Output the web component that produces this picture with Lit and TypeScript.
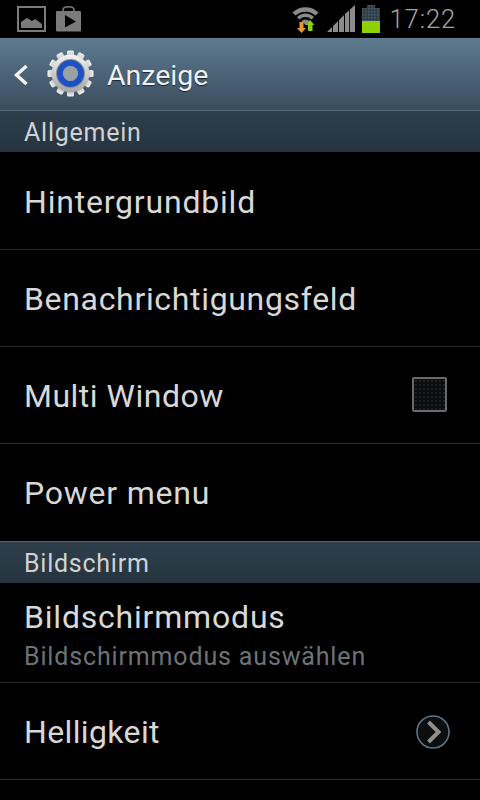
import { LitElement, html, css, svg } from "lit";
import { customElement } from "lit/decorators.js";

const teeth = Array.from({ length: 12 }, (_, i) => i * 30);

@customElement("app-root")
export class AppRoot extends LitElement {
  static styles = css`
    :host { display: block; width: 480px; height: 800px; overflow: hidden; background: #000; font-family: Roboto, "Liberation Sans", sans-serif; color: #e3e3e3; }
    svg { display: block; flex: none; }
    .status { height: 38px; background: #000; display: flex; align-items: center; padding: 0 24px 0 17px; box-sizing: border-box; }
    .status .left { display: flex; gap: 9px; align-items: center; margin-top: -1px; }
    .status .right { margin-left: auto; display: flex; align-items: center; }
    .clock { font-size: 25.5px; color: #a6a6a6; letter-spacing: 0.9px; margin-left: 10px; line-height: 38px; font-weight: 300; }
    .actionbar { height: 72px; box-sizing: border-box; display: flex; align-items: center; padding: 0 0 0 13px; background: linear-gradient(#5f7a8f 0%, #4d6579 45%, #3b4d5e 100%); }
    .title { font-size: 28.5px; color: #f0f0f0; margin-left: 13px; margin-top: 3px; text-shadow: 0 1px 1px #1a2630; line-height: 72px; }
    .gear { margin-left: 18px; }
    .section { height: 42px; box-sizing: border-box; display: flex; align-items: center; padding: 1px 0 0 24px; font-size: 25px; letter-spacing: 0.75px; color: #d2d2d2; background: linear-gradient(#2e3f4b, #25343f); border-top: 1px solid #56697a; }
    .row { box-sizing: border-box; display: flex; align-items: center; padding: 1px 33px 0 24px; border-bottom: 1px solid #2a2a2a; height: 97px; font-size: 32px; letter-spacing: 0.67px; color: #d8d8d8; }
    .row .txt { flex: 1; }
    .row.first { height: 98px; padding-top: 3px; letter-spacing: 0.8px; }
    .row.plain { border-bottom: none; height: 97px; }
    .row.multi { letter-spacing: 0.5px; }
    .row.two { height: 100px; padding-top: 6px; letter-spacing: 0.8px; }
    .sub { font-size: 25px; letter-spacing: 0.85px; color: #6e7276; margin-top: 8px; line-height: 28px; }
    .main { line-height: 36px; margin-top: -2px; }
    .box { width: 35px; height: 35px; box-sizing: border-box; margin: -2px 0 0 0; border: 2px solid #6a6a6a; border-radius: 2px; background-color: #0c0d0e; background-image: radial-gradient(#1d2022 1px, transparent 1.2px); background-size: 4px 4px; }
    .row.last { padding-right: 29px; letter-spacing: 0.37px; }
    .power { letter-spacing: 0.77px; }
  `;

  render() {
    return html`
      <div class="status">
        <div class="left">
          <svg width="29" height="26" viewBox="0 0 29 26">
            <rect x="1" y="1" width="27" height="24" fill="none" stroke="#7b7b7b" stroke-width="2"/>
            <path d="M4 22 V16 L10 12 L15 15 L18 13 L25 18 V22 Z" fill="#7b7b7b"/>
          </svg>
          <svg width="27" height="26" viewBox="0 0 27 26">
            <path d="M8 6 V4 Q8 0.8 13.5 0.8 Q19 0.8 19 4 V6" fill="none" stroke="#7b7b7b" stroke-width="1.6"/>
            <path d="M1 6 Q1 5 2 5 H25 Q26 5 26 6 V24 Q26 25.5 25 25.5 H2 Q1 25.5 1 24 Z" fill="#7b7b7b"/>
            <path d="M10 9 L21 15.5 L10 21.5 Z" fill="#050505"/>
          </svg>
        </div>
        <div class="right">
          <svg width="28" height="28" viewBox="0 0 28 28" style="margin-right:7px">
            <path d="M0.5 7.5 A19 19 0 0 1 26.5 7.5 L23.5 10.5 A15 15 0 0 0 3.5 10.5 Z" fill="#8a8a8a"/>
            <path d="M5 12 A12 12 0 0 1 22 12 L19.5 14.5 A8.5 8.5 0 0 0 7.5 14.5 Z" fill="#8a8a8a"/>
            <path d="M9.5 16 A6.5 6.5 0 0 1 17.5 16 L13.5 20 Z" fill="#8a8a8a"/>
            <path d="M7.5 17 H11.5 V23 H14 L9.5 28 L5 23 H7.5 Z" fill="#f0962a"/>
            <path d="M19 15 L23.5 20 H21.5 V26 H17 V20 H14.5 Z" transform="translate(-1 0)" fill="#8fcc14"/>
          </svg>
          <svg width="28" height="28" viewBox="0 0 28 28" style="margin-right:7px">
            <path d="M0 27 L5 22 V27 Z M6 21 L11 16 V27 H6 Z M12 15 L17 10 V27 H12 Z M18 9 L28 0 V27 H18 Z" fill="#8c8c8c"/>
            <path d="M22.5 5 V27" stroke="#000" stroke-width="0.8"/>
          </svg>
          <svg width="18" height="28" viewBox="0 0 18 28">
            <defs>
              <pattern id="dots" width="3" height="3" patternUnits="userSpaceOnUse">
                <rect width="3" height="3" fill="#2f3d47"/>
                <rect width="1.5" height="1.5" fill="#4c5f6d"/>
              </pattern>
            </defs>
            <rect x="5" y="0" width="8" height="3" fill="url(#dots)"/>
            <rect x="0" y="3" width="18" height="13" fill="url(#dots)"/>
            <rect x="0" y="16" width="18" height="12" fill="#8fd000"/>
          </svg>
          <span class="clock">17:22</span>
        </div>
      </div>
      <div class="actionbar">
        <svg width="16" height="22" viewBox="0 0 16 22" style="margin-top:2px">
          <path d="M13.5 2 L3.5 11 L13.5 20" fill="none" stroke="#f2f2f2" stroke-width="3.4"/>
        </svg>
        <svg class="gear" width="47" height="47" viewBox="0 0 47 47" style="margin-top:-1px">
          <defs>
            <linearGradient id="g" x1="0" y1="0" x2="0" y2="1">
              <stop offset="0" stop-color="#f2f2f2"/>
              <stop offset="1" stop-color="#a4a4a4"/>
            </linearGradient>
          </defs>
          ${teeth.map((a) => svg`<rect x="20" y="0.5" width="7" height="9" rx="1.5" fill="url(#g)" transform="rotate(${a} 23.5 23.5)"/>`)}
          <circle cx="23.5" cy="23.5" r="19" fill="url(#g)"/>
          <circle cx="23.5" cy="23.5" r="14.5" fill="#8e8e8e"/>
          <circle cx="23.5" cy="23.5" r="10.5" fill="none" stroke="#1c52c4" stroke-width="6"/>
          <circle cx="23.5" cy="23.5" r="7.5" fill="#9aa0a4"/>
        </svg>
        <span class="title">Anzeige</span>
      </div>
      <div class="section">Allgemein</div>
      <div class="row first"><span class="txt">Hintergrundbild</span></div>
      <div class="row"><span class="txt">Benachrichtigungsfeld</span></div>
      <div class="row multi"><span class="txt">Multi Window</span><div class="box"></div></div>
      <div class="row plain"><span class="txt power">Power menu</span></div>
      <div class="section">Bildschirm</div>
      <div class="row two"><div class="txt"><div class="main">Bildschirmmodus</div><div class="sub">Bildschirmmodus auswählen</div></div></div>
      <div class="row last"><span class="txt">Helligkeit</span>
        <svg width="36" height="36" viewBox="0 0 36 36">
          <circle cx="18" cy="18" r="16" fill="#0c0e10" stroke="#5f7383" stroke-width="1.6"/>
          <path d="M13.5 8 L23.5 18 L13.5 28" fill="none" stroke="#8f8f8f" stroke-width="4"/>
        </svg>
      </div>
    `;
  }
}
